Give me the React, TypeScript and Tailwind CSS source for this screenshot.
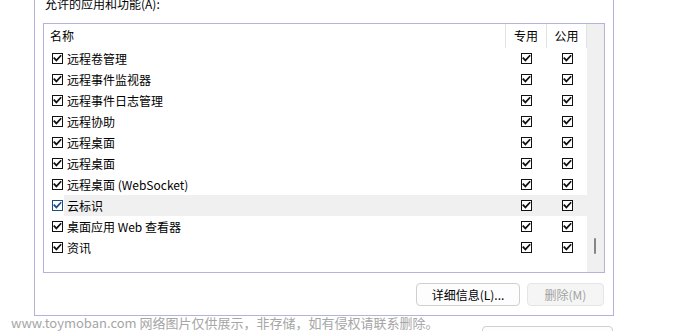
import React from "react";

const rows = [
  "远程卷管理",
  "远程事件监视器",
  "远程事件日志管理",
  "远程协助",
  "远程桌面",
  "远程桌面",
  "远程桌面 (WebSocket)",
  "云标识",
  "桌面应用 Web 查看器",
  "资讯",
];

function Box({ blue = false }: { blue?: boolean }) {
  const c = blue ? "#1a4f86" : "#111111";
  return (
    <svg width="11" height="11" viewBox="0 0 11 11" className="block shrink-0">
      <rect x="0.5" y="0.5" width="10" height="10" fill="#fff" stroke={c} strokeWidth="1" />
      <path d="M2.3 5.2 L4.4 7.4 L8.6 2.9" fill="none" stroke={c} strokeWidth="1.7" strokeLinecap="square" />
    </svg>
  );
}

export default function App() {
  return (
    <div
      className="relative w-[683px] h-[331px] overflow-hidden bg-white text-[12px] text-black"
      style={{ fontFamily: '"Noto Sans CJK SC", "Noto Sans", sans-serif' }}
    >
      <div className="ml-[34px] w-[580px] border-x border-b border-[#b3b3dc]">
        <div className="pl-[10px] -mt-[4px] h-[27px] leading-[16px]">允许的应用和功能(A):</div>
        <div className="ml-[8px] w-[562px] h-[250px] border border-[#b3b3dc] flex">
          <div className="flex-1 flex flex-col">
            <div className="flex h-[24px] items-center">
              <div className="w-[461px] pl-[6px] leading-[16px]">名称</div>
              <div className="w-[41px] h-full border-l border-[#e3e3e3] flex items-center justify-center">专用</div>
              <div className="w-[41px] h-full border-x border-[#e3e3e3] flex items-center justify-center">公用</div>
            </div>
            {rows.map((r, i) => {
              const hl = i === 7;
              return (
                <div key={i} className="flex h-[21px] items-center">
                  <div className="w-[20px] flex justify-end pr-[1px] h-full items-center">
                    <div className="ml-[8px]">
                      <Box blue={hl} />
                    </div>
                  </div>
                  <div className={"flex-1 flex h-full items-center " + (hl ? "bg-[#f0f0f0]" : "")}>
                    <div className="w-[441px] pl-[3px] whitespace-nowrap leading-[16px]">{r}</div>
                    <div className="w-[41px] flex justify-center pl-[1px]">
                      <Box />
                    </div>
                    <div className="w-[41px] flex justify-center pl-[1px]">
                      <Box />
                    </div>
                  </div>
                </div>
              );
            })}
          </div>
          <div className="w-[17px] bg-[#f0f0f0] relative">
            <div className="absolute left-[7px] top-[214px] w-[2px] h-[16px] rounded-full bg-[#858585]" />
          </div>
        </div>
        <div className="flex justify-end gap-[7px] pr-[9px] mt-[10px] mb-[9px]">
          <div className="w-[104px] h-[23px] rounded-[4px] border border-[#cfcfcf] bg-[#fdfdfd] flex items-center justify-center">
            详细信息(L)...
          </div>
          <div className="w-[77px] h-[23px] rounded-[4px] border border-[#e5e5e5] bg-[#f5f5f5] text-[#a2a2a2] flex items-center justify-center">
            删除(M)
          </div>
        </div>
      </div>
      <div className="ml-[482px] mt-[10px] w-[131px] h-[23px] rounded-[4px] border border-[#cfcfcf] bg-[#fdfdfd] flex items-center justify-center">
        允许其他应用(R)...
      </div>
      <div className="absolute left-[11px] top-[314px] text-[13px] leading-[18px] text-[#a6a6a6] whitespace-nowrap">
        www.toymoban.com 网络图片仅供展示，非存储，如有侵权请联系删除。
      </div>
    </div>
  );
}
